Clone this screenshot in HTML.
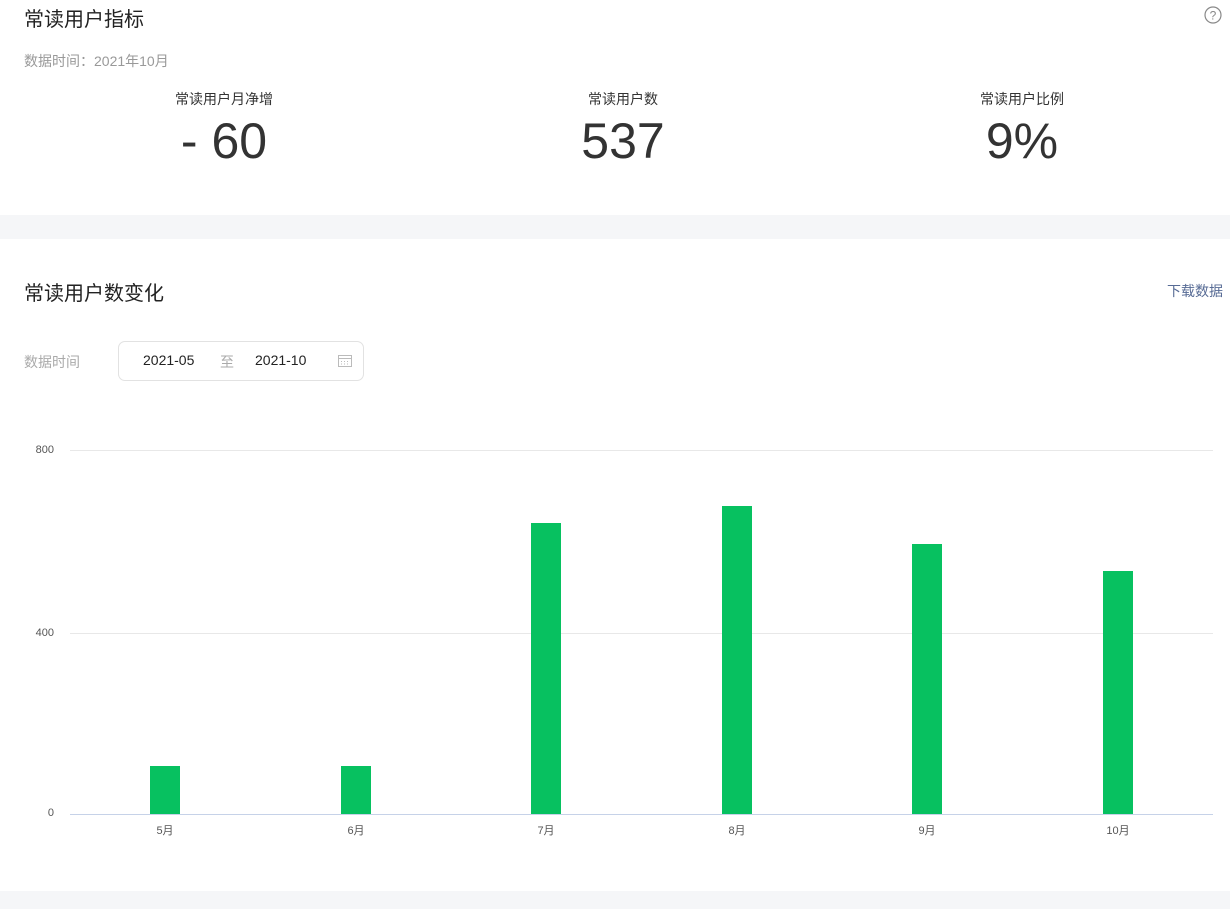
<!DOCTYPE html>
<html><head><meta charset="utf-8"><style>
*{margin:0;padding:0;box-sizing:border-box}
body{width:1230px;height:909px;background:#f5f6f8;position:relative;overflow:hidden;font-family:"Liberation Sans","Noto Sans CJK SC",sans-serif}
.a{position:absolute}
.card{position:absolute;left:0;width:1230px;background:#fff}
.bar{position:absolute;width:30px;background:#07c160}
.yl{position:absolute;font-size:11px;color:#555;text-align:right;width:30px;left:24px}
.xl{position:absolute;font-size:11px;color:#555;text-align:center;width:60px;top:822px}
.grid{position:absolute;left:70px;width:1143px;height:1px;background:#e8e8e8}
</style></head><body>
<div class="card" style="top:0;height:215px"></div>
<div class="card" style="top:239px;height:652px"></div>
<div class="a" style="left:24px;top:3px;font-size:20px;color:#222">常读用户指标</div>
<svg class="a" style="left:1204px;top:6px" width="18" height="18" viewBox="0 0 18 18"><circle cx="9" cy="9" r="8" fill="none" stroke="#888" stroke-width="1.2"/><text x="9" y="13.5" font-size="12" text-anchor="middle" fill="#888" font-family="Liberation Sans">?</text></svg>
<div class="a" style="left:24px;top:51px;font-size:14px;color:#999">数据时间：2021年10月</div>
<div class="a" style="left:124px;width:200px;text-align:center;top:89px;font-size:14px;color:#333">常读用户月净增</div>
<div class="a" style="left:124px;width:200px;text-align:center;top:112px;font-size:50px;color:#333">- 60</div>
<div class="a" style="left:523px;width:200px;text-align:center;top:89px;font-size:14px;color:#333">常读用户数</div>
<div class="a" style="left:523px;width:200px;text-align:center;top:112px;font-size:50px;color:#333">537</div>
<div class="a" style="left:922px;width:200px;text-align:center;top:89px;font-size:14px;color:#333">常读用户比例</div>
<div class="a" style="left:922px;width:200px;text-align:center;top:112px;font-size:50px;color:#333">9%</div>

<div class="a" style="left:24px;top:277px;font-size:20px;color:#222">常读用户数变化</div>
<div class="a" style="left:1167px;top:281px;font-size:14px;color:#576b95">下载数据</div>
<div class="a" style="left:24px;top:352px;font-size:14px;color:#aaa">数据时间</div>
<div class="a" style="left:118px;top:341px;width:246px;height:40px;border:1px solid #e2e2e2;border-radius:7px"></div>
<div class="a" style="left:143px;top:352px;font-size:14px;color:#222">2021-05</div>
<div class="a" style="left:220px;top:352px;font-size:14px;color:#aaa">至</div>
<div class="a" style="left:255px;top:352px;font-size:14px;color:#222">2021-10</div>
<svg class="a" style="left:337px;top:354px" width="16" height="14" viewBox="0 0 16 14"><rect x="1.5" y="1.5" width="13" height="11" fill="none" stroke="#bbb"/><line x1="1.5" y1="4.5" x2="14.5" y2="4.5" stroke="#bbb"/><g fill="#bbb"><rect x="4" y="7" width="1" height="1"/><rect x="7" y="7" width="1" height="1"/><rect x="10" y="7" width="1" height="1"/><rect x="4" y="9.5" width="1" height="1"/><rect x="7" y="9.5" width="1" height="1"/><rect x="10" y="9.5" width="1" height="1"/></g></svg>

<div class="grid" style="top:450px"></div>
<div class="grid" style="top:633px"></div>
<div class="a" style="left:70px;top:814px;width:1143px;height:1px;background:#c6d2e8"></div>
<div class="yl" style="top:444px">800</div>
<div class="yl" style="top:627px">400</div>
<div class="yl" style="top:807px">0</div>

<div class="bar" style="left:150px;top:766px;height:48px"></div>
<div class="bar" style="left:341px;top:766px;height:48px"></div>
<div class="bar" style="left:531px;top:523px;height:291px"></div>
<div class="bar" style="left:722px;top:506px;height:308px"></div>
<div class="bar" style="left:912px;top:544px;height:270px"></div>
<div class="bar" style="left:1103px;top:571px;height:243px"></div>
<div class="xl" style="left:135px">5月</div>
<div class="xl" style="left:326px">6月</div>
<div class="xl" style="left:516px">7月</div>
<div class="xl" style="left:707px">8月</div>
<div class="xl" style="left:897px">9月</div>
<div class="xl" style="left:1088px">10月</div>
</body></html>
